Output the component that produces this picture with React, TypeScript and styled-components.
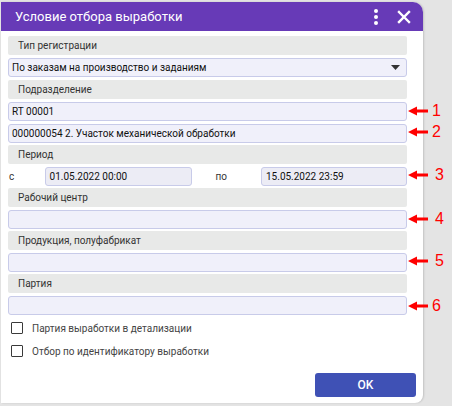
import React from 'react';
import styled, { createGlobalStyle } from 'styled-components';

const GlobalStyle = createGlobalStyle`
  html, body {
    margin: 0;
    padding: 0;
    background: #e4e4e4;
    font-family: Roboto, "Liberation Sans", Arial, sans-serif;
  }
`;

const Page = styled.div`
  position: relative;
  width: 452px;
  height: 406px;
  overflow: hidden;
  padding: 2px 0 0 1px;
  box-sizing: border-box;
`;

const Dialog = styled.div`
  width: 422px;
  height: 401px;
  background: #fff;
  border-radius: 0 10px 8px 0;
  display: flex;
  flex-direction: column;
  overflow: hidden;
  box-shadow: 1px 0 2px rgba(0, 0, 0, 0.15);
`;

const Header = styled.div`
  height: 29px;
  background: #673ab7;
  display: flex;
  align-items: center;
  padding: 0 8px 0 14px;
  flex-shrink: 0;
`;

const Title = styled.div`
  flex: 1;
  color: #fff;
  font-size: 13px;
  font-weight: 400;
`;

const IconButton = styled.div`
  width: 22px;
  height: 22px;
  display: flex;
  align-items: center;
  justify-content: center;
  margin-left: 6px;
`;

const Body = styled.div`
  flex: 1;
  display: flex;
  flex-direction: column;
  padding: 5px 16px 6px 7px;
`;

const SectionLabel = styled.div`
  height: 19px;
  background: #e8e9e8;
  border-radius: 2px;
  display: flex;
  align-items: center;
  padding-left: 10px;
  margin-bottom: 3px;
  font-size: 10px;
  color: #333;
`;

const Field = styled.div<{ $width?: number }>`
  height: 19px;
  box-sizing: border-box;
  background: #f0f0fa;
  border: 1px solid #c8cbe9;
  border-radius: 3px;
  display: flex;
  align-items: center;
  padding: 0 4px 0 ${(p) => (p.$width ? 4 : 3)}px;
  margin-bottom: 2px;
  font-size: 10px;
  color: #111;
  width: ${(p) => (p.$width ? `${p.$width}px` : 'auto')};
  flex-shrink: 0;
`;

const SelectField = styled(Field)`
  justify-content: space-between;
  padding-right: 6px;
`;

const PeriodRow = styled.div`
  display: flex;
  align-items: center;
  margin-bottom: 2px;
  font-size: 10px;
  color: #333;
`;

const PeriodText = styled.span<{ $width: number; $indent?: number }>`
  width: ${(p) => p.$width}px;
  box-sizing: border-box;
  padding-left: ${(p) => p.$indent ?? 1}px;
`;

const PeriodField = styled(Field)`
  margin-bottom: 0;
  background: #ececf5;
`;

const Checks = styled.div`
  display: flex;
  flex-direction: column;
  gap: 11px;
  margin-top: 5px;
  padding-left: 3px;
`;

const CheckRow = styled.label`
  display: flex;
  align-items: center;
  gap: 9px;
  font-size: 10px;
  color: #444;
`;

const Box = styled.span`
  width: 12px;
  height: 12px;
  box-sizing: border-box;
  border: 1.5px solid #3a3a3a;
  border-radius: 1px;
  background: #fff;
`;

const Footer = styled.div`
  margin-top: auto;
  display: flex;
  justify-content: flex-end;
  margin-right: -9px;
`;

const OkButton = styled.button`
  width: 101px;
  height: 24px;
  border: none;
  border-radius: 3px;
  background: #3f51b5;
  color: #fff;
  font-family: inherit;
  font-size: 12px;
  font-weight: 500;
`;

const Note = styled.div<{ $top: number; $numLeft: number }>`
  position: absolute;
  left: 408px;
  top: ${(p) => p.$top}px;
  width: 44px;
  height: 18px;

  & > span {
    position: absolute;
    left: ${(p) => p.$numLeft}px;
    top: 0;
    font-family: "Liberation Sans", Arial, sans-serif;
    font-size: 16px;
    line-height: 18px;
    color: #f00;
  }
`;

const Arrow = () => (
  <svg width="22" height="18" viewBox="0 0 22 18" style={{ position: 'absolute', left: 0, top: 0 }}>
    <path d="M0 9 L9 4.5 L9 7.5 L20 7.5 L20 10.5 L9 10.5 L9 13.5 Z" fill="#f00" />
  </svg>
);

const notes = [
  { n: '1', top: 102, left: 24 },
  { n: '2', top: 123, left: 24 },
  { n: '3', top: 166, left: 27 },
  { n: '4', top: 210, left: 27 },
  { n: '5', top: 252, left: 27 },
  { n: '6', top: 297, left: 24 },
];

export default function App() {
  return (
    <>
      <GlobalStyle />
      <Page>
        <Dialog>
          <Header>
            <Title>Условие отбора выработки</Title>
            <IconButton>
              <svg width="6" height="18" viewBox="0 0 6 18">
                <circle cx="3" cy="3" r="2" fill="#fff" />
                <circle cx="3" cy="9" r="2" fill="#fff" />
                <circle cx="3" cy="15" r="2" fill="#fff" />
              </svg>
            </IconButton>
            <IconButton>
              <svg width="14" height="14" viewBox="0 0 14 14">
                <path d="M2 2 L12 12 M12 2 L2 12" stroke="#fff" strokeWidth="2.4" strokeLinecap="square" />
              </svg>
            </IconButton>
          </Header>
          <Body>
            <SectionLabel>Тип регистрации</SectionLabel>
            <SelectField>
              <span>По заказам на производство и заданиям</span>
              <svg width="9" height="5" viewBox="0 0 9 5">
                <path d="M0 0 L9 0 L4.5 5 Z" fill="#333" />
              </svg>
            </SelectField>
            <SectionLabel style={{ marginTop: 1 }}>Подразделение</SectionLabel>
            <Field>RT 00001</Field>
            <Field style={{ marginTop: 1 }}>000000054 2. Участок механической обработки</Field>
            <SectionLabel>Период</SectionLabel>
            <PeriodRow>
              <PeriodText $width={37}>с</PeriodText>
              <PeriodField $width={147}>01.05.2022 00:00</PeriodField>
              <PeriodText $width={70} $indent={24}>
                по
              </PeriodText>
              <PeriodField $width={146}>15.05.2022 23:59</PeriodField>
            </PeriodRow>
            <SectionLabel>Рабочий центр</SectionLabel>
            <Field />
            <SectionLabel>Продукция, полуфабрикат</SectionLabel>
            <Field />
            <SectionLabel>Партия</SectionLabel>
            <Field />
            <Checks>
              <CheckRow>
                <Box />
                Партия выработки в детализации
              </CheckRow>
              <CheckRow>
                <Box />
                Отбор по идентификатору выработки
              </CheckRow>
            </Checks>
            <Footer>
              <OkButton>OK</OkButton>
            </Footer>
          </Body>
        </Dialog>
        {notes.map((x) => (
          <Note key={x.n} $top={x.top} $numLeft={x.left}>
            <Arrow />
            <span>{x.n}</span>
          </Note>
        ))}
      </Page>
    </>
  );
}
